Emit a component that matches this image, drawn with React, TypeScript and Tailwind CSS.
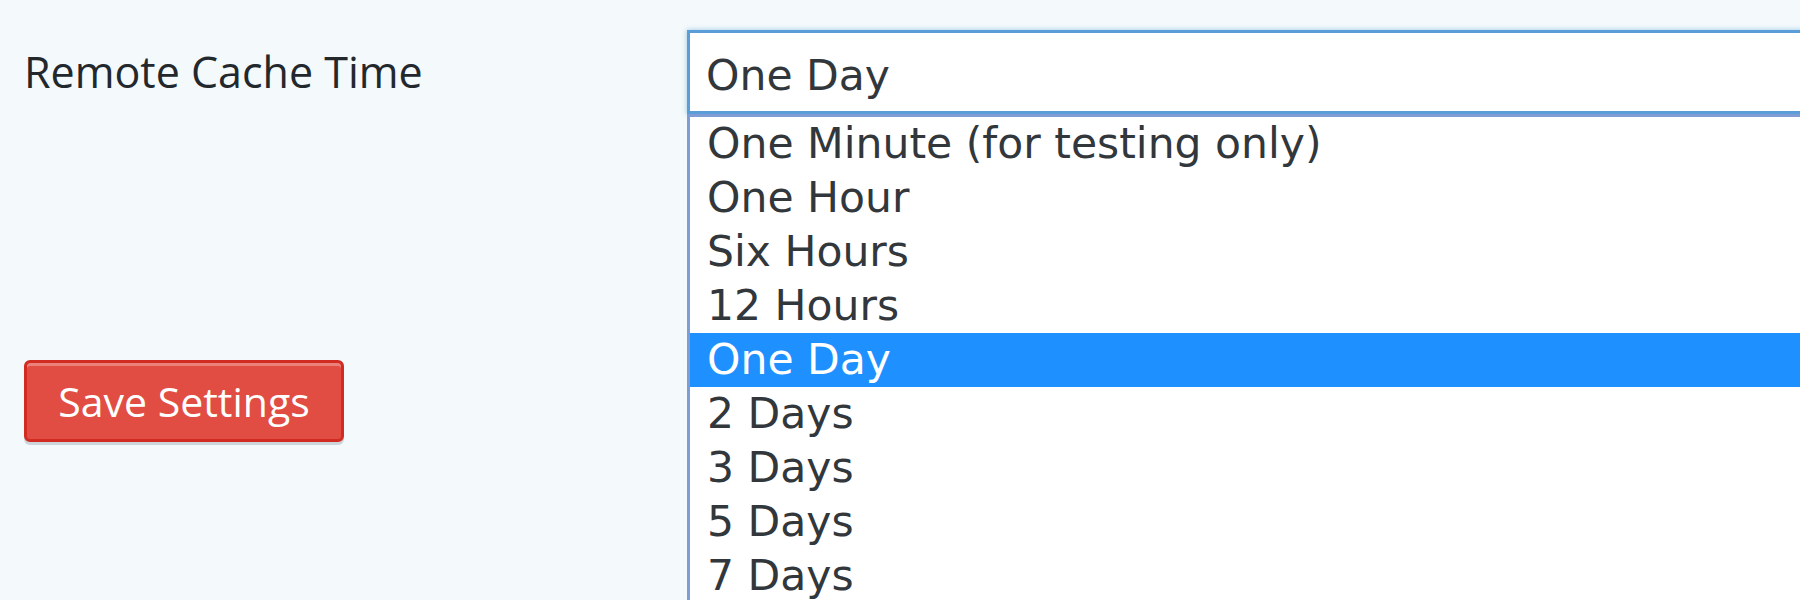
const options = [
  "One Minute (for testing only)",
  "One Hour",
  "Six Hours",
  "12 Hours",
  "One Day",
  "2 Days",
  "3 Days",
  "5 Days",
  "7 Days",
  "14 Days",
];

export default function App() {
  const selected = "One Day";

  return (
    <div className="flex h-[600px] w-[1800px] overflow-hidden bg-[#f4f9fc]">
      {/* left column: label + save button */}
      <div className="flex w-[687px] shrink-0 flex-col items-start pl-[24px] font-['Open_Sans',sans-serif]">
        <label className="mt-[43px] text-[43px] leading-[58px] text-[#23282d]">
          Remote Cache Time
        </label>
        <button
          type="button"
          className="mt-[259px] flex h-[82px] w-[320px] shrink-0 items-center justify-center rounded-[6px] border-[3px] border-[#d02c21] bg-[#e14d43] text-[41px] leading-none text-white shadow-[inset_0_3px_0_rgba(255,255,255,0.3),0_3px_0_#cbd5da]"
        >
          Save Settings
        </button>
      </div>

      {/* right column: open select */}
      <div className="flex w-[1200px] shrink-0 flex-col pt-[30px] font-['DejaVu_Sans',sans-serif] text-[42.5px] text-[#32373c]">
        <div className="h-[84px] shrink-0 border-[3px] border-[#5b9dd9] bg-white pl-[16px] pt-[16px] leading-[54px] shadow-[0_0_5px_rgba(30,140,190,0.45)]">
          {selected}
        </div>
        <ul className="shrink-0 border-l-[3px] border-t-[3px] border-[#7f9cd4] bg-white">
          {options.map((o) => (
            <li
              key={o}
              className={
                o === selected
                  ? "h-[54px] bg-[#1e90ff] pl-[17px] leading-[54px] text-white"
                  : "h-[54px] pl-[17px] leading-[54px]"
              }
            >
              {o}
            </li>
          ))}
        </ul>
      </div>
    </div>
  );
}
